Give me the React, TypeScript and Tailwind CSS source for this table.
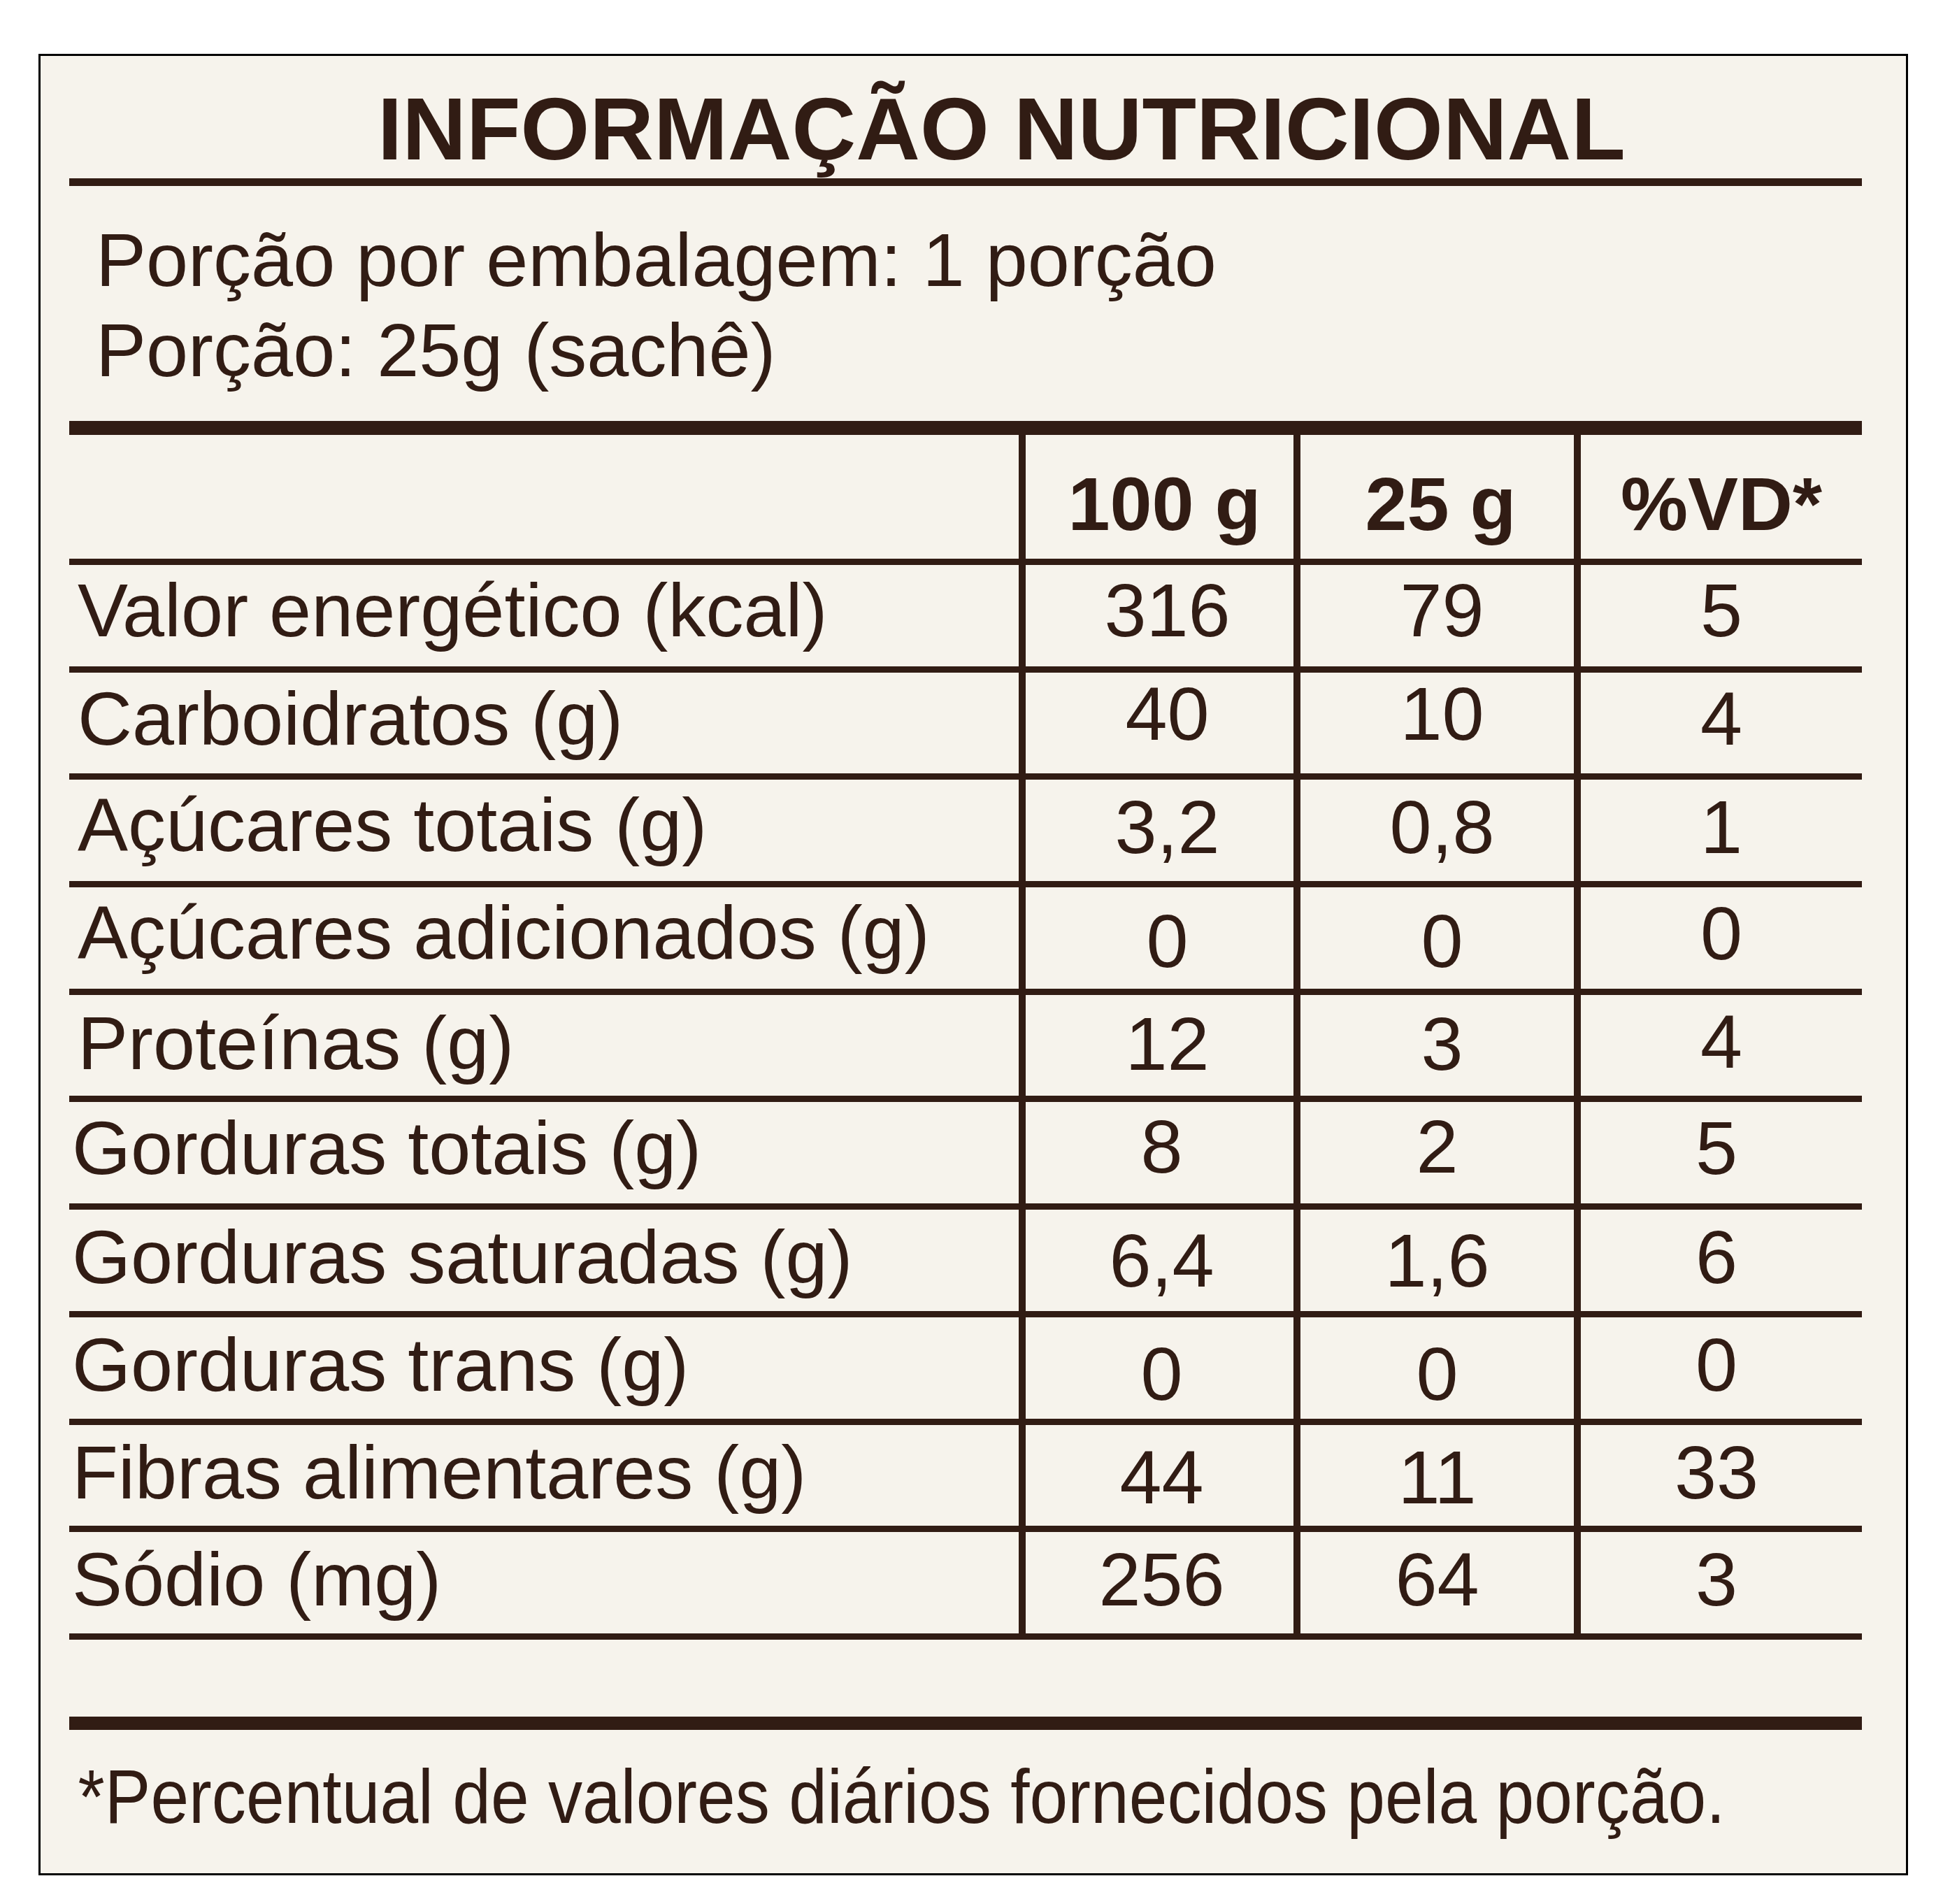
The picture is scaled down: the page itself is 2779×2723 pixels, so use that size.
const rows = [
  { label: "Valor energético (kcal)", v: ["316", "79", "5"], pt: ["pt-[11px]", "pt-[11px]", "pt-[11px]", "pt-[11px]"], top: true },
  { label: "Carboidratos (g)", v: ["40", "10", "4"], pt: ["pt-[12px]", "pt-[5px]", "pt-[5px]", "pt-[12px]"], top: true },
  { label: "Açúcares totais (g)", v: ["3,2", "0,8", "1"], pt: ["pt-[11px]", "pt-[14px]", "pt-[14px]", "pt-[14px]"], top: true },
  { label: "Açúcares adicionados (g)", v: ["0", "0", "0"], pt: ["pt-[11px]", "pt-[23px]", "pt-[23px]", "pt-[12px]"], top: true },
  { label: "Proteínas (g)", v: ["12", "3", "4"], pt: ["pt-[15px]", "pt-[16px]", "pt-[16px]", "pt-[13px]"], top: true },
  { label: "Gorduras totais (g)", v: ["8", "2", "5"], pt: ["pt-[12px]", "pt-[10px]", "pt-[10px]", "pt-[12px]"], top: false },
  { label: "Gorduras saturadas (g)", v: ["6,4", "1,6", "6"], pt: ["pt-[14px]", "pt-[19px]", "pt-[19px]", "pt-[14px]"], top: false },
  { label: "Gorduras trans (g)", v: ["0", "0", "0"], pt: ["pt-[14px]", "pt-[27px]", "pt-[27px]", "pt-[14px]"], top: false },
  { label: "Fibras alimentares (g)", v: ["44", "11", "33"], pt: ["pt-[14px]", "pt-[21px]", "pt-[21px]", "pt-[14px]"], top: false },
  { label: "Sódio (mg)", v: ["256", "64", "3"], pt: ["pt-[14px]", "pt-[14px]", "pt-[14px]", "pt-[14px]"], top: false },
];

// the upper half of the table sits a few px further right than the lower half
const shiftTop = ["pl-[12px]", "pl-[22px]", "pl-[14px]", ""];
const shiftBottom = ["pl-[4px]", "pl-[6px]", "", "pr-[14px]"];

export default function App() {
  return (
    <div className="w-[2779px] h-[2723px] bg-white pt-[77px] pl-[55px] font-['Liberation_Sans',Arial,sans-serif] text-[#311c14]">
      <div className="w-[2674px] h-[2605px] border-[3px] border-black bg-[#f6f3ec] pl-[41px] flex flex-col">
        <div className="w-[2564px] flex flex-col">
          {/* title */}
          <h1 className="pt-[41px] pl-[441px] text-[127px] leading-none font-bold whitespace-nowrap">
            INFORMAÇÃO NUTRICIONAL
          </h1>
          <div className="mt-[7px] h-[11px] bg-[#311c14]" />

          {/* serving info */}
          <div className="mt-[41px] pl-[38px] text-[108px] leading-[129px] whitespace-nowrap">
            <p>Porção por embalagem: 1 porção</p>
            <p>Porção: 25g (sachê)</p>
          </div>
          <div className="mt-[37px] h-[20px] bg-[#311c14]" />

          {/* table */}
          <div className="grid grid-cols-[1358px_393px_401px_412px] text-[108px] leading-none">
            <div className="h-[186px] border-b-[9px] border-[#311c14]" />
            <div className="h-[186px] border-b-[9px] border-l-[10px] border-[#311c14] pt-[45px] pl-[14px] text-center font-bold whitespace-nowrap">
              100 g
            </div>
            <div className="h-[186px] border-b-[9px] border-l-[10px] border-[#311c14] pt-[45px] pl-[10px] text-center font-bold whitespace-nowrap">
              25 g
            </div>
            <div className="h-[186px] border-b-[9px] border-l-[10px] border-[#311c14] pt-[45px] text-center font-bold whitespace-nowrap">
              %VD*
            </div>

            {rows.map((row) => {
              const shift = row.top ? shiftTop : shiftBottom;
              return [
                <div
                  key={row.label}
                  className={`h-[153.7px] border-b-[9px] border-[#311c14] whitespace-nowrap ${row.pt[0]} ${shift[0]}`}
                >
                  {row.label}
                </div>,
                ...row.v.map((val, i) => (
                  <div
                    key={row.label + i}
                    className={`h-[153.7px] border-b-[9px] border-l-[10px] border-[#311c14] text-center whitespace-nowrap ${row.pt[i + 1]} ${shift[i + 1]}`}
                  >
                    {val}
                  </div>
                )),
              ];
            })}
          </div>

          <div className="mt-[110px] h-[19px] bg-[#311c14]" />

          {/* footnote */}
          <p className="mt-[40px] pl-[14px] text-[110px] leading-none whitespace-nowrap scale-x-[0.894] origin-left">
            *Percentual de valores diários fornecidos pela porção.
          </p>
        </div>
      </div>
    </div>
  );
}
